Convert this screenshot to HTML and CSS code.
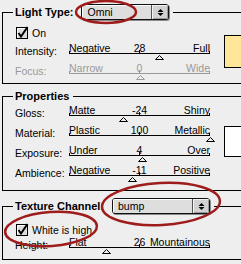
FILE: index.html
```html
<!DOCTYPE html>
<html lang="en">
<head>
  <meta charset="UTF-8">
  <title>Light Settings</title>
  <link rel="stylesheet" href="styles.css">
</head>
<body>

<!-- Light Type -->
<fieldset class="group group-light">
  <legend>
    <div class="legend-inner">
      <span class="title">Light Type:</span>
      <div class="popup popup-light">
        <span class="popup-text">Omni</span>
        <span class="popup-arrows">
          <svg width="7" height="9" viewBox="0 0 7 9"><polygon points="0.5,4 3.5,1 6.5,4"/><polygon points="0.5,5 6.5,5 3.5,8"/></svg>
        </span>
      </div>
    </div>
  </legend>
  <div class="group-body">
    <div class="rows">
      <div class="check-row">
        <svg class="check" width="14" height="13" viewBox="0 0 14 13">
          <rect x="0.5" y="1.5" width="11" height="11" fill="#dcdcdc" stroke="#000"/>
          <path d="M1.5 11V2.5H10.5" fill="none" stroke="#fff"/>
          <path d="M2.5 7 L5 10.5 L11.5 1" fill="none" stroke="#000" stroke-width="2"/>
        </svg>
        <span>On</span>
      </div>
      <div class="row">
        <span class="label">Intensity:</span>
        <div class="slider">
          <div class="scale"><span>Negative</span><span>28</span><span class="max">Full</span></div>
          <div class="track"></div>
          <svg class="thumb" style="left:64%" width="9" height="6" viewBox="0 0 9 6"><polygon points="4.5,0.5 8.5,4.5 0.5,4.5"/></svg>
        </div>
      </div>
      <div class="row off">
        <span class="label">Focus:</span>
        <div class="slider">
          <div class="scale"><span>Narrow</span><span>0</span><span class="max">Wide</span></div>
          <div class="track"></div>
          <svg class="thumb" style="left:50%" width="9" height="6" viewBox="0 0 9 6"><polygon points="4.5,0.5 8.5,4.5 0.5,4.5"/></svg>
        </div>
      </div>
    </div>
    <div class="swatch swatch-yellow"></div>
  </div>
</fieldset>

<!-- Properties -->
<fieldset class="group group-props">
  <legend>
    <div class="legend-inner">
      <span class="title">Properties</span>
    </div>
  </legend>
  <div class="group-body">
    <div class="rows">
      <div class="row">
        <span class="label">Gloss:</span>
        <div class="slider">
          <div class="scale"><span>Matte</span><span>-24</span><span class="max">Shiny</span></div>
          <div class="track"></div>
          <svg class="thumb" style="left:38%" width="9" height="6" viewBox="0 0 9 6"><polygon points="4.5,0.5 8.5,4.5 0.5,4.5"/></svg>
        </div>
      </div>
      <div class="row">
        <span class="label">Material:</span>
        <div class="slider">
          <div class="scale"><span>Plastic</span><span>100</span><span class="max">Metallic</span></div>
          <div class="track"></div>
          <svg class="thumb" style="left:100%" width="9" height="6" viewBox="0 0 9 6"><polygon points="4.5,0.5 8.5,4.5 0.5,4.5"/></svg>
        </div>
      </div>
      <div class="row">
        <span class="label">Exposure:</span>
        <div class="slider">
          <div class="scale"><span>Under</span><span>4</span><span class="max">Over</span></div>
          <div class="track"></div>
          <svg class="thumb" style="left:52%" width="9" height="6" viewBox="0 0 9 6"><polygon points="4.5,0.5 8.5,4.5 0.5,4.5"/></svg>
        </div>
      </div>
      <div class="row">
        <span class="label">Ambience:</span>
        <div class="slider">
          <div class="scale"><span>Negative</span><span>-11</span><span class="max">Positive</span></div>
          <div class="track"></div>
          <svg class="thumb" style="left:44.5%" width="9" height="6" viewBox="0 0 9 6"><polygon points="4.5,0.5 8.5,4.5 0.5,4.5"/></svg>
        </div>
      </div>
    </div>
    <div class="swatch swatch-white"></div>
  </div>
</fieldset>

<!-- Texture Channel -->
<fieldset class="group group-tex">
  <legend>
    <div class="legend-inner">
      <span class="title">Texture Channel:</span>
      <div class="popup popup-tex">
        <span class="popup-text">bump</span>
        <span class="popup-arrows">
          <svg width="7" height="9" viewBox="0 0 7 9"><polygon points="0.5,4 3.5,1 6.5,4"/><polygon points="0.5,5 6.5,5 3.5,8"/></svg>
        </span>
      </div>
    </div>
  </legend>
  <div class="group-body">
    <div class="rows">
      <div class="check-row">
        <svg class="check" width="14" height="13" viewBox="0 0 14 13">
          <rect x="0.5" y="1.5" width="11" height="11" fill="#dcdcdc" stroke="#000"/>
          <path d="M1.5 11V2.5H10.5" fill="none" stroke="#fff"/>
          <path d="M2.5 7 L5 10.5 L11.5 1" fill="none" stroke="#000" stroke-width="2"/>
        </svg>
        <span>White is high</span>
      </div>
      <div class="row">
        <span class="label">Height:</span>
        <div class="slider">
          <div class="scale"><span>Flat</span><span>26</span><span class="max">Mountainous</span></div>
          <div class="track"></div>
          <svg class="thumb" style="left:26%" width="9" height="6" viewBox="0 0 9 6"><polygon points="4.5,0.5 8.5,4.5 0.5,4.5"/></svg>
        </div>
      </div>
    </div>
  </div>
</fieldset>

<!-- red pen marks over the screenshot -->
<svg class="marks" width="241" height="264" viewBox="0 0 241 264">
  <ellipse cx="106" cy="12" rx="30" ry="11"/>
  <ellipse cx="161" cy="204" rx="59" ry="21" transform="rotate(-3 161 204)"/>
  <ellipse cx="51" cy="229" rx="46" ry="17" transform="rotate(-4 51 229)"/>
</svg>

</body>
</html>
```

FILE: styles.css
```css
body {
  position: relative;
  margin: 0;
  padding-top: 4px;
  width: 241px;
  height: 264px;
  box-sizing: border-box;
  overflow: hidden;
  background: #eeeeee;
  font-family: "Liberation Sans", Arial, sans-serif;
  font-size: 10.5px;
  color: #000;
}
.group {
  margin: 0 0 0 2px;
  padding: 0;
  width: 290px;
  border: 1px solid #000;
}
.group-props {
  margin-top: 4px;
}
.group-tex {
  margin-top: 7px;
}
legend {
  margin-left: 10px;
  padding: 0 4px 0 2px;
}
.legend-inner {
  display: flex;
  align-items: center;
  height: 16px;
}
.title {
  font-weight: bold;
  font-size: 11px;
  line-height: 16px;
}
.popup {
  display: flex;
  height: 16px;
  margin-left: 8px;
  box-sizing: border-box;
  border: 1px solid #111;
  border-radius: 3px;
  background: #dedede;
  box-shadow: 1px 1px 0 #8a8a8a;
  overflow: hidden;
}
.popup-light {
  width: 88px;
}
.popup-tex {
  width: 98px;
}
.popup-text {
  flex: 1;
  padding-left: 5px;
  line-height: 14px;
  border-right: 1px solid #555;
  box-shadow: inset 1px 1px 0 #fff;
}
.popup-arrows {
  width: 16px;
  display: flex;
  align-items: center;
  justify-content: center;
  background: #d2d2d2;
  box-shadow: inset 1px 1px 0 #f4f4f4, inset -1px -1px 0 #9a9a9a;
}
.popup-arrows polygon {
  fill: #000;
}
.group-body {
  display: flex;
  align-items: flex-start;
}
.group-light .group-body {
  padding-bottom: 1px;
}
.group-props .group-body {
  padding-bottom: 6px;
}
.group-tex .group-body {
  padding-bottom: 3px;
}
.rows {
  padding-left: 12px;
  width: 195px;
}
.check-row {
  display: flex;
  align-items: center;
  gap: 2px;
  height: 13px;
  margin: 6px 0 3px 1px;
}
.group-tex .check-row {
  margin: 9px 0 0 1px;
}
.row {
  display: flex;
  height: 20px;
}
.label {
  width: 54px;
  padding-top: 3px;
  line-height: 12px;
}
.slider {
  position: relative;
  width: 141px;
}
.scale {
  display: grid;
  grid-template-columns: minmax(0, 1fr) auto minmax(0, 1fr);
  height: 9px;
  line-height: 12px;
  white-space: nowrap;
}
.scale .max {
  text-align: right;
}
.track {
  position: relative;
  height: 2px;
  border: 1px solid #000;
  border-top: 0;
}
.track::after {
  content: "";
  position: absolute;
  left: 69px;
  bottom: 0;
  width: 1px;
  height: 3px;
  background: #000;
}
.thumb {
  position: absolute;
  top: 13px;
  margin-left: -4px;
}
.thumb polygon {
  fill: #eeeeee;
  stroke: #000;
}
.off {
  color: #999;
}
.off .track {
  border-color: #999;
}
.off .track::after {
  background: #999;
}
.off .thumb polygon {
  stroke: #999;
}
.swatch {
  flex: none;
  width: 40px;
  margin-left: 14px;
  box-sizing: border-box;
  border: 1px solid #000;
}
.swatch-yellow {
  margin-top: 15px;
  height: 33px;
  background: #ffe699;
}
.swatch-white {
  margin-top: 22px;
  height: 31px;
  background: #fff;
}
.marks {
  position: absolute;
  left: 0;
  top: 0;
  pointer-events: none;
}
.marks ellipse {
  fill: none;
  stroke: #9e1c1c;
  stroke-width: 2.5;
}
```
